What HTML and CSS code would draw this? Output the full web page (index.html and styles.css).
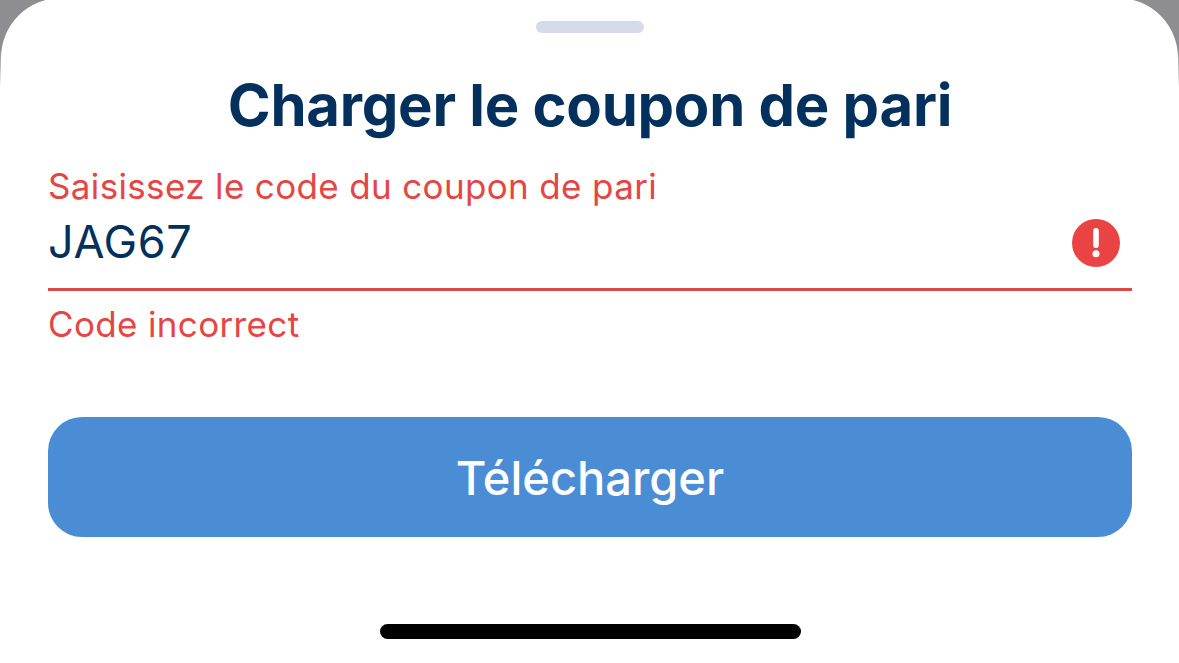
FILE: index.html
```html
<!DOCTYPE html>
<html lang="fr">
<head>
<meta charset="utf-8">
<title>Charger le coupon de pari</title>
<link rel="stylesheet" href="styles.css">
</head>
<body>
<main class="sheet">
  <div class="grabber"></div>
  <h1 class="title">Charger le coupon de pari</h1>
  <label class="label" for="code">Saisissez le code du coupon de pari</label>
  <div class="field">
    <span class="value" id="code">JAG67</span>
    <svg class="alert" viewBox="0 0 48 48" width="48" height="48" aria-hidden="true">
      <circle cx="24" cy="24" r="24" fill="#ea4343"/>
      <rect x="21.2" y="9" width="5.6" height="20" rx="2.8" fill="#fff"/>
      <circle cx="24" cy="34.8" r="3.5" fill="#fff"/>
    </svg>
  </div>
  <p class="error">Code incorrect</p>
  <button class="submit" type="button">Télécharger</button>
  <div class="home"></div>
</main>
</body>
</html>
```

FILE: styles.css
```css
* { box-sizing: border-box; }
html, body { margin: 0; height: 100%; }
body {
  width: 1179px;
  height: 663px;
  overflow: hidden;
  background: linear-gradient(#8e8e92 0, #8e8e92 50px, #fff 88px);
  font-family: Inter, "Liberation Sans", sans-serif;
}
.sheet {
  height: 665px;
  margin: -2px 1px 0;
  padding: 23px 46px 0 47px;
  display: flex;
  flex-direction: column;
  background: #fff;
  border-radius: 60px 60px 0 0;
}
.grabber {
  align-self: center;
  width: 108px;
  height: 12px;
  border-radius: 6px;
  background: #d5dbe8;
}
.title {
  margin: 36px 0 0;
  height: 72px;
  font-size: 58px;
  line-height: 72px;
  font-weight: 700;
  text-align: center;
  letter-spacing: -0.25px;
  color: #03305c;
}
.label {
  margin-top: 23px;
  height: 44px;
  font-size: 35px;
  line-height: 44px;
  letter-spacing: 0.35px;
  color: #e64545;
}
.field {
  height: 83px;
  display: flex;
  align-items: center;
  justify-content: space-between;
  padding: 0 12px 12px 0;
  border-bottom: 3px solid #e04848;
}
.value {
  font-size: 45px;
  line-height: 50px;
  letter-spacing: 0.6px;
  color: #03305c;
}
.alert { flex: none; margin-top: 2px; }
.error {
  margin: 11px 0 0;
  height: 44px;
  font-size: 35px;
  line-height: 44px;
  letter-spacing: 0.35px;
  color: #e64545;
}
.submit {
  margin-top: 71px;
  height: 120px;
  border: 0;
  border-radius: 34px;
  background: #4a8dd5;
  color: #fff;
  font: 500 47px Inter, "Liberation Sans", sans-serif;
}
.home {
  align-self: center;
  width: 421px;
  height: 15px;
  margin-top: 87px;
  border-radius: 8px;
  background: #000;
}
```
